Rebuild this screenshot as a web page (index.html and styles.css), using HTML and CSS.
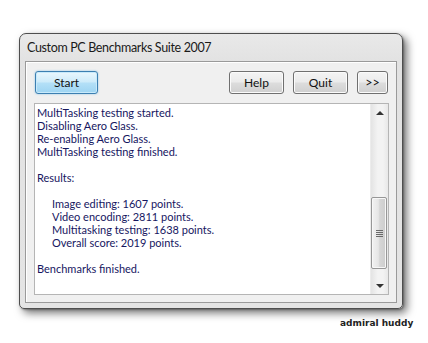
FILE: index.html
```html
<!DOCTYPE html>
<html>
<head>
<meta charset="utf-8">
<link rel="stylesheet" href="styles.css">
</head>
<body>
<div class="stage">
  <div class="window">
    <div class="titlebar">Custom PC Benchmarks Suite 2007</div>
    <div class="client">
      <div class="toolbar">
        <button class="btn btn-default">Start</button>
        <div class="spacer"></div>
        <button class="btn btn-help">Help</button>
        <button class="btn btn-quit">Quit</button>
        <button class="btn btn-more">&gt;&gt;</button>
      </div>
      <div class="logbox">
        <div class="log">
          <div class="line">MultiTasking testing started.</div>
          <div class="line">Disabling Aero Glass.</div>
          <div class="line">Re-enabling Aero Glass.</div>
          <div class="line">MultiTasking testing finished.</div>
          <div class="line">&nbsp;</div>
          <div class="line">Results:</div>
          <div class="line">&nbsp;</div>
          <div class="line indent">Image editing: 1607 points.</div>
          <div class="line indent">Video encoding: 2811 points.</div>
          <div class="line indent">Multitasking testing: 1638 points.</div>
          <div class="line indent">Overall score: 2019 points.</div>
          <div class="line">&nbsp;</div>
          <div class="line">Benchmarks finished.</div>
        </div>
        <div class="scrollbar">
          <div class="arrow up"></div>
          <div class="track">
            <div class="thumb">
              <div class="grip"></div>
            </div>
          </div>
          <div class="arrow down"></div>
        </div>
      </div>
    </div>
  </div>
  <div class="credit">admiral huddy</div>
</div>
</body>
</html>
```

FILE: styles.css
```css
html, body {
  margin: 0;
  padding: 0;
  background: #ffffff;
}

.stage {
  width: 428px;
  height: 343px;
  padding: 33px 0 0 19px;
  box-sizing: border-box;
  font-family: Lato, "Open Sans", sans-serif;
}

.window {
  width: 384px;
  height: 276px;
  box-sizing: border-box;
  border: 1px solid #4e4e4e;
  border-radius: 7px 7px 5px 5px;
  background: linear-gradient(to bottom, #e9e9e9 0px, #e2e2e2 28px, #e4e4e4 100%);
  box-shadow: 4px 4px 9px rgba(0, 0, 0, 0.55), 1px 1px 2px rgba(0,0,0,0.3);
  display: flex;
  flex-direction: column;
}

.titlebar {
  height: 27px;
  padding-left: 7px;
  display: flex;
  align-items: center;
  font-size: 12.5px;
  letter-spacing: -0.35px;
  color: #1a1a1a;
}

.client {
  flex: 1;
  margin: 0 5px 5px 5px;
  border: 1px solid #9a9a9a;
  box-shadow: inset 1px 1px 0 #ffffff;
  background: #f0f0f0;
  padding: 9px 7px 7px 8px;
  display: flex;
  flex-direction: column;
}

.toolbar {
  display: flex;
  gap: 9px;
  padding-left: 1px;
  padding-right: 1px;
  height: 23px;
}

.spacer {
  flex: 1;
}

.btn {
  height: 23px;
  box-sizing: border-box;
  border: 1px solid #707070;
  border-radius: 3px;
  background: linear-gradient(to bottom, #f4f4f4 0%, #ebebeb 48%, #dddddd 52%, #cfcfcf 100%);
  box-shadow: inset 0 0 0 1px #fbfbfb;
  font-family: Lato, "Open Sans", sans-serif;
  font-size: 12px;
  color: #111;
  padding: 0;
  margin: 0;
}

.btn-default {
  width: 63px;
  border-color: #3c7fb1;
  background: linear-gradient(to bottom, #eaf7fd 0%, #cdebfa 48%, #b4e0f7 52%, #9dd4f2 100%);
  box-shadow: inset 0 0 0 1px #c8eafb, 0 0 2px rgba(60,160,220,0.6);
}

.btn-help, .btn-quit {
  width: 55px;
}

.btn-more {
  width: 31px;
  font-size: 12.5px;
}

.logbox {
  margin-top: 9px;
  flex: 1;
  border: 1px solid #b5b5b5;
  background: #ffffff;
  display: flex;
}

.log {
  flex: 1;
  padding: 2px 0 0 2px;
  font-size: 11px;
  line-height: 13px;
  color: #16165f;
  white-space: nowrap;
}

.line.indent {
  padding-left: 15px;
}

.scrollbar {
  width: 17px;
  display: flex;
  flex-direction: column;
  background: linear-gradient(to right, #e4e4e4, #f3f3f3 40%, #f3f3f3 70%, #e8e8e8);
  border-left: 1px solid #ececec;
}

.arrow {
  height: 17px;
  position: relative;
}

.arrow::after {
  content: "";
  position: absolute;
  left: 5px;
  width: 0;
  height: 0;
  border-left: 4px solid transparent;
  border-right: 4px solid transparent;
}

.arrow.up::after {
  top: 7px;
  border-bottom: 4px solid #333;
}

.arrow.down::after {
  top: 7px;
  border-top: 4px solid #333;
}

.track {
  flex: 1;
  display: flex;
  flex-direction: column;
  justify-content: flex-end;
  padding-bottom: 8px;
}

.thumb {
  height: 72px;
  margin: 0 1px 0 0;
  box-sizing: border-box;
  border: 1px solid #979797;
  border-radius: 2px;
  background: linear-gradient(to right, #f2f2f2 0%, #e6e6e6 45%, #d6d6d6 55%, #cdcdcd 100%);
  box-shadow: inset 0 0 0 1px #f7f7f7;
  display: flex;
  align-items: center;
  justify-content: center;
}

.grip {
  width: 7px;
  height: 7px;
  background: repeating-linear-gradient(to bottom, #6a6a6a 0, #6a6a6a 1px, transparent 1px, transparent 2px);
}

.credit {
  margin: 9px 0 0 321px;
  font-family: "DejaVu Sans", Verdana, sans-serif;
  font-weight: bold;
  font-size: 9px;
  color: #222;
}
```
